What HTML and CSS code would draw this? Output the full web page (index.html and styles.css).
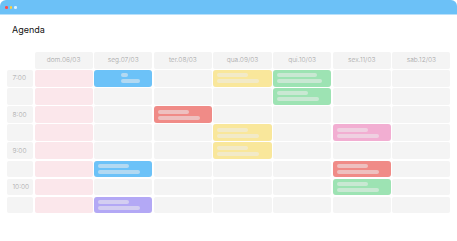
FILE: index.html
```html
<!DOCTYPE html>
<html lang="pt">
<head>
<meta charset="utf-8">
<title>Agenda</title>
<link rel="stylesheet" href="styles.css">
</head>
<body>
<div class="window">
  <div class="titlebar">
    <span class="dot dot-red"></span>
    <span class="dot dot-yellow"></span>
    <span class="dot dot-light"></span>
  </div>
  <div class="main">
    <h1 class="title">Agenda</h1>
    <div class="agenda">
      <div class="corner"></div>
      <div class="head">dom.06/03</div>
      <div class="head">seg.07/03</div>
      <div class="head">ter.08/03</div>
      <div class="head">qua.09/03</div>
      <div class="head">qui.10/03</div>
      <div class="head">sex.11/03</div>
      <div class="head">sab.12/03</div>

      <div class="time">7:00</div>
      <div class="cell sun"></div>
      <div class="cell"><div class="event blue offset"><span class="bar w7"></span><span class="bar w19"></span></div></div>
      <div class="cell"></div>
      <div class="cell"><div class="event yellow"><span class="bar"></span><span class="bar long"></span></div></div>
      <div class="cell"><div class="event green"><span class="bar w40"></span><span class="bar w45"></span></div></div>
      <div class="cell"></div>
      <div class="cell"></div>

      <div class="time"></div>
      <div class="cell sun"></div>
      <div class="cell"></div>
      <div class="cell"></div>
      <div class="cell"></div>
      <div class="cell"><div class="event green"><span class="bar"></span><span class="bar long"></span></div></div>
      <div class="cell"></div>
      <div class="cell"></div>

      <div class="time">8:00</div>
      <div class="cell sun"></div>
      <div class="cell"></div>
      <div class="cell"><div class="event red"><span class="bar"></span><span class="bar long"></span></div></div>
      <div class="cell"></div>
      <div class="cell"></div>
      <div class="cell"></div>
      <div class="cell"></div>

      <div class="time"></div>
      <div class="cell sun"></div>
      <div class="cell"></div>
      <div class="cell"></div>
      <div class="cell"><div class="event yellow"><span class="bar"></span><span class="bar long"></span></div></div>
      <div class="cell"></div>
      <div class="cell"><div class="event pink"><span class="bar"></span><span class="bar long"></span></div></div>
      <div class="cell"></div>

      <div class="time">9:00</div>
      <div class="cell sun"></div>
      <div class="cell"></div>
      <div class="cell"></div>
      <div class="cell"><div class="event yellow"><span class="bar"></span><span class="bar long"></span></div></div>
      <div class="cell"></div>
      <div class="cell"></div>
      <div class="cell"></div>

      <div class="time"></div>
      <div class="cell sun"></div>
      <div class="cell"><div class="event blue"><span class="bar"></span><span class="bar long"></span></div></div>
      <div class="cell"></div>
      <div class="cell"></div>
      <div class="cell"></div>
      <div class="cell"><div class="event red"><span class="bar"></span><span class="bar long"></span></div></div>
      <div class="cell"></div>

      <div class="time">10:00</div>
      <div class="cell sun"></div>
      <div class="cell"></div>
      <div class="cell"></div>
      <div class="cell"></div>
      <div class="cell"></div>
      <div class="cell"><div class="event green"><span class="bar"></span><span class="bar long"></span></div></div>
      <div class="cell"></div>

      <div class="time"></div>
      <div class="cell sun"></div>
      <div class="cell"><div class="event purple"><span class="bar"></span><span class="bar long"></span></div></div>
      <div class="cell"></div>
      <div class="cell"></div>
      <div class="cell"></div>
      <div class="cell"></div>
      <div class="cell"></div>
    </div>
  </div>
</div>
</body>
</html>
```
FILE: styles.css
```css
html, body {
  margin: 0;
  padding: 0;
  background: #ffffff;
}

body {
  font-family: Inter, "Liberation Sans", sans-serif;
  color: #111;
}

.window {
  width: 457px;
  height: 241px;
  background: #fff;
}

.titlebar {
  height: 14px;
  background: #6cc1f7;
  border-bottom: 1px solid #b9e0fa;
  border-radius: 6px 6px 0 0;
  display: flex;
  align-items: center;
  gap: 2px;
  padding-left: 5px;
}

.dot {
  width: 2.6px;
  height: 2.6px;
  border-radius: 50%;
  margin-top: 0.5px;
}
.dot-red { background: #ff4b4b; }
.dot-yellow { background: #ffd23a; }
.dot-light { background: #d9efff; }

.main {
  padding: 8.8px 6.5px 0 7px;
}

.title {
  margin: 0 0 17.2px 5px;
  font-size: 9px;
  line-height: 11px;
  font-weight: 400;
  color: #111;
}

.agenda {
  display: grid;
  grid-template-columns: 26px repeat(7, 1fr);
  grid-auto-rows: 16.6px;
  gap: 1.5px;
}

.corner {
  background: transparent;
}

.head {
  background: #f4f4f4;
  border-radius: 2px;
  font-size: 6.6px;
  font-weight: 300;
  color: #a6a6a6;
  display: flex;
  align-items: center;
  justify-content: center;
}

.time {
  background: #f4f4f4;
  border-radius: 2px;
  font-size: 6.6px;
  font-weight: 300;
  color: #a6a6a6;
  display: flex;
  align-items: center;
  padding-left: 5.5px;
}

.cell {
  background: #f4f4f4;
  border-radius: 2px;
  display: flex;
}

.cell.sun {
  background: #fbe7eb;
}

.event {
  flex: 1;
  border-radius: 3px;
  display: flex;
  flex-direction: column;
  justify-content: center;
  align-items: flex-start;
  gap: 2px;
  padding-left: 4px;
}

.event.offset {
  padding-left: 26.5px;
}

.bar {
  display: block;
  height: 4px;
  width: 31px;
  border-radius: 2px;
  background: rgba(236, 236, 236, 0.55);
}
.bar.long { width: 42px; }
.bar.w7 { width: 7px; }
.bar.w19 { width: 19px; }
.bar.w40 { width: 40px; }
.bar.w45 { width: 45px; }

.blue { background: #6cc2f8; }
.yellow { background: #f9e79b; }
.green { background: #9de3b3; }
.red { background: #f08b87; }
.pink { background: #f2aed2; }
.purple { background: #b3a8f5; }
```
